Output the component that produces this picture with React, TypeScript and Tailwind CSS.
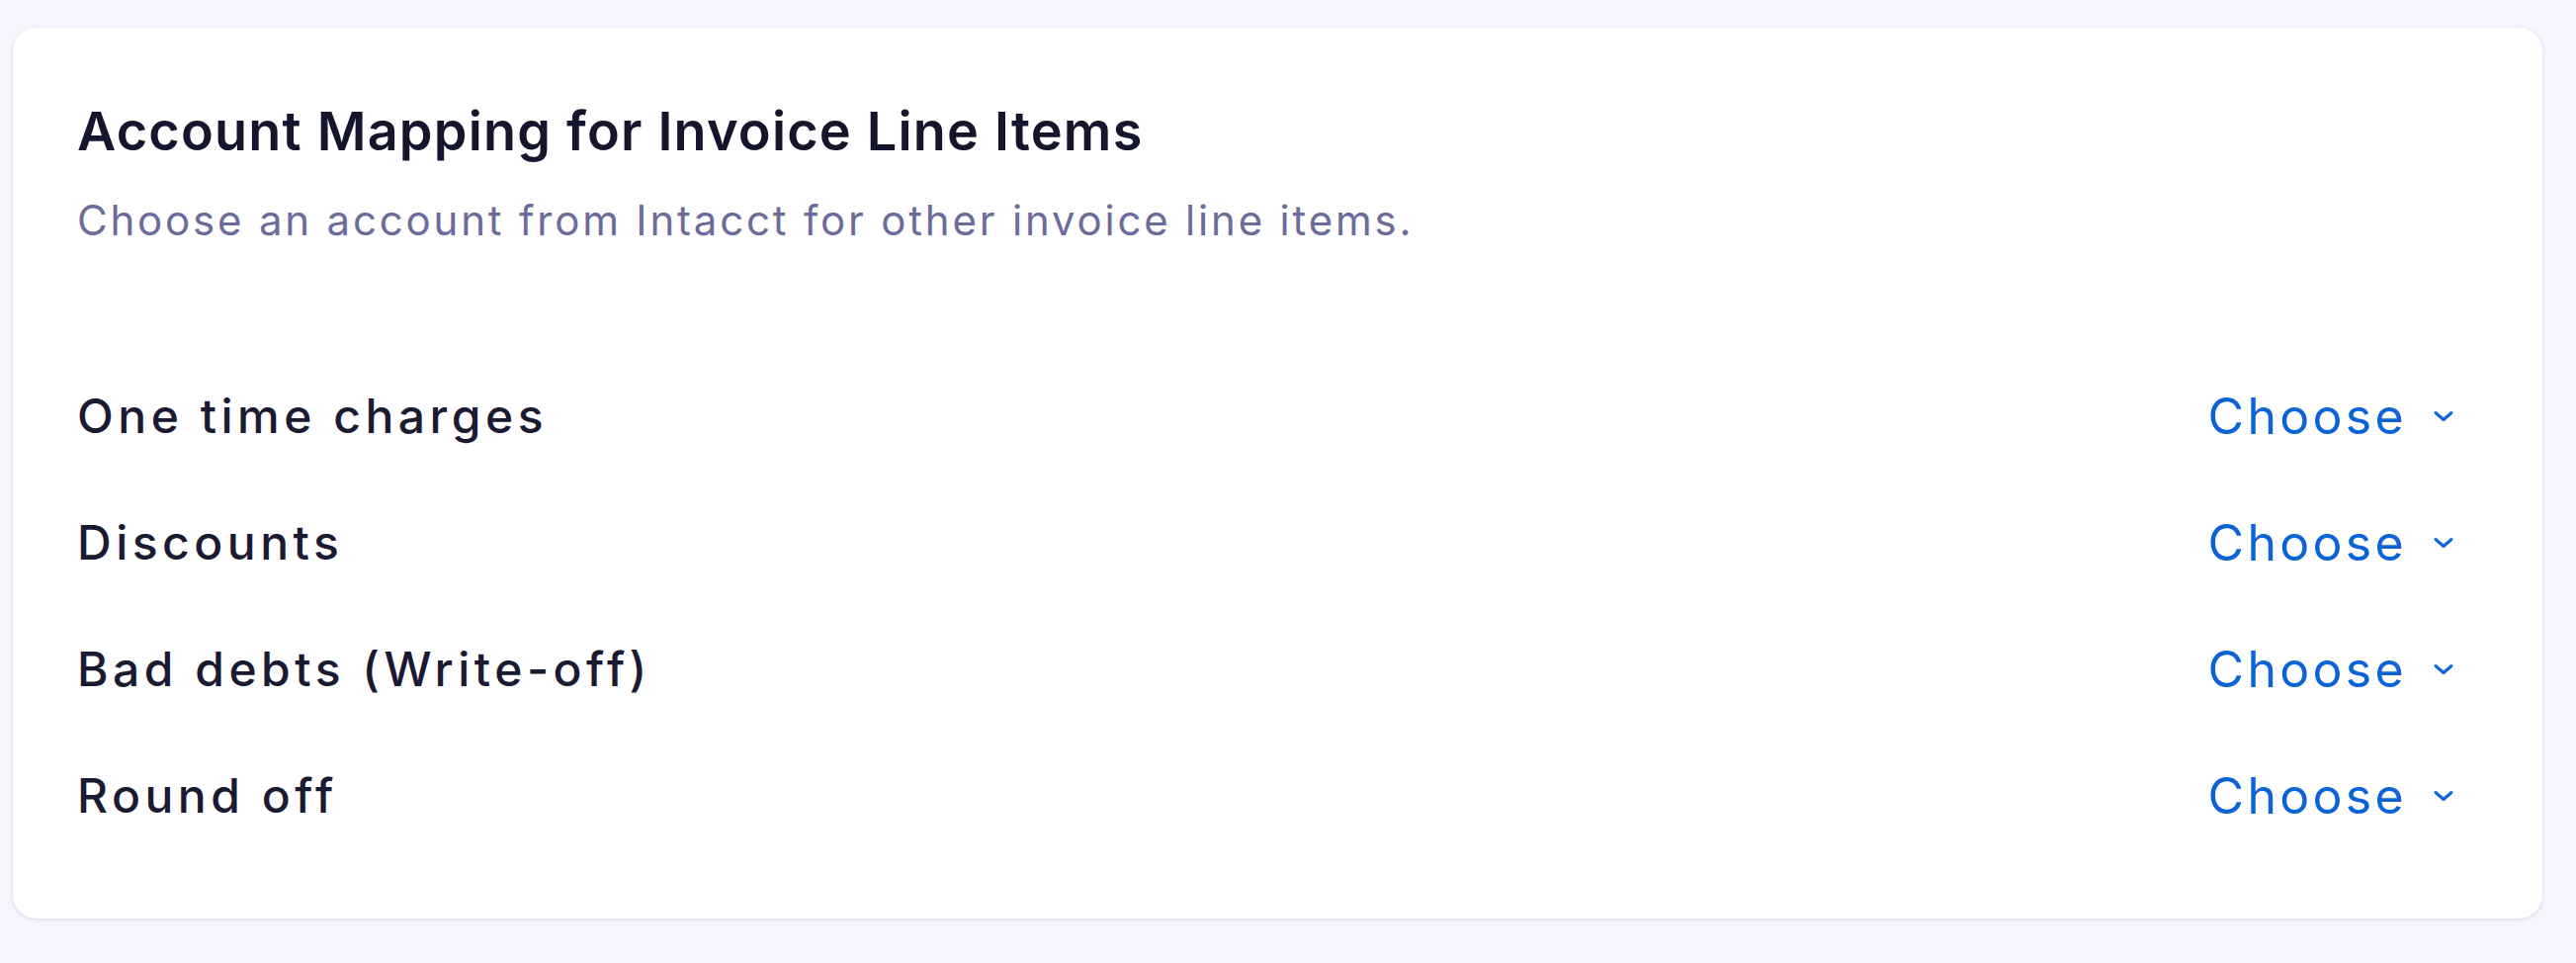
import React from "react";

const rows = ["One time charges", "Discounts", "Bad debts (Write-off)", "Round off"];

function Chevron() {
  return (
    <svg width="22" height="14" viewBox="0 0 22 14" fill="none" className="shrink-0">
      <path d="M3 3.5 L11 10.5 L19 3.5" stroke="#0b63d6" strokeWidth="3" strokeLinecap="round" strokeLinejoin="round" />
    </svg>
  );
}

export default function App() {
  return (
    <div className="min-h-[974px] w-full bg-[#f6f6fe] pt-[28px] pl-[13px]" style={{ fontFamily: "Inter, 'Noto Sans', sans-serif" }}>
      <div className="w-[2559px] h-[901px] rounded-[24px] bg-white shadow-[0_1px_4px_rgba(70,70,130,0.18)] pl-[65px] pr-[89px] pt-[73px]">
        <h1 className="text-[54px] leading-[64px] font-semibold text-[#15152e] tracking-[1.2px]">
          Account Mapping for Invoice Line Items
        </h1>
        <p className="mt-[34px] text-[42px] leading-[48px] text-[#6b6b9c] tracking-[2.8px]">
          Choose an account from Intacct for other invoice line items.
        </p>
        <div className="mt-[110px] flex flex-col">
          {rows.map((r) => (
            <div key={r} className="h-[128px] flex items-center justify-between">
              <span className="text-[48px] leading-[58px] font-medium text-[#1a1a33] tracking-[4.5px]">{r}</span>
              <button className="flex items-center gap-[26px] text-[50px] leading-[58px] text-[#0b63d6] tracking-[3.3px]">
                <span>Choose</span>
                <Chevron />
              </button>
            </div>
          ))}
        </div>
      </div>
    </div>
  );
}
